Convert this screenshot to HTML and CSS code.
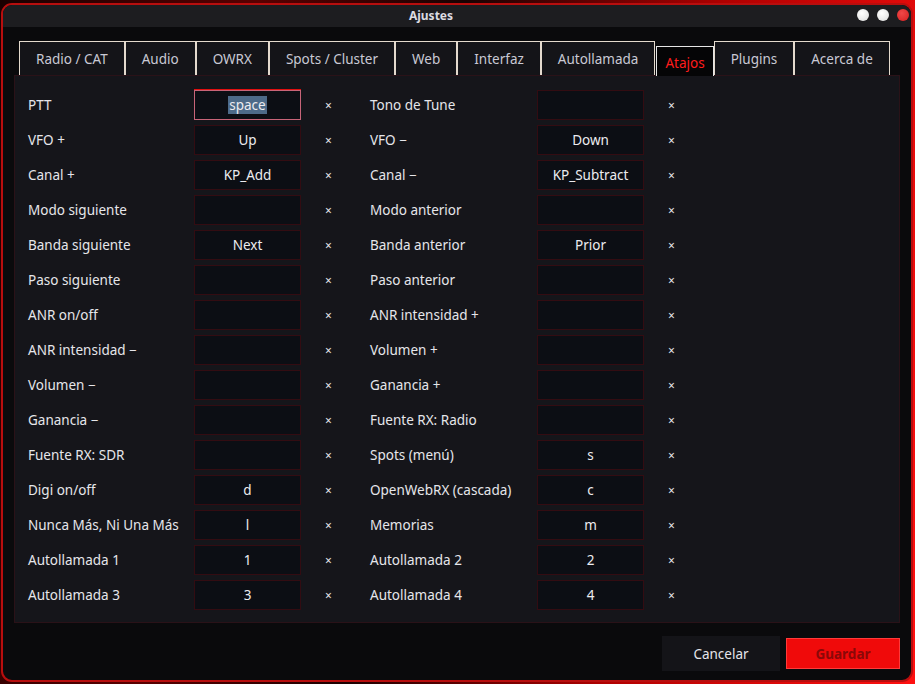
FILE: index.html
```html
<!DOCTYPE html>
<html>
<head>
  <meta charset="UTF-8">
  <link rel="stylesheet" href="styles.css">
</head>
<body>
  <div class="window">
    <div class="title-bar">
      <div class="title">Ajustes</div>
      <div class="win-buttons">
        <span class="win-btn"></span>
        <span class="win-btn"></span>
        <span class="win-btn close"></span>
      </div>
    </div>

    <div class="content">
      <div class="tabs">
        <div class="tab">Radio / CAT</div>
        <div class="tab">Audio</div>
        <div class="tab">OWRX</div>
        <div class="tab">Spots / Cluster</div>
        <div class="tab">Web</div>
        <div class="tab">Interfaz</div>
        <div class="tab">Autollamada</div>
        <div class="tab active">Atajos</div>
        <div class="tab">Plugins</div>
        <div class="tab">Acerca de</div>
      </div>

      <div class="pane">
        <div class="shortcuts">
          <div class="label">PTT</div>
          <div class="key focused"><span class="sel">space</span></div>
          <div class="clear">×</div>
          <div class="label">Tono de Tune</div>
          <div class="key"></div>
          <div class="clear">×</div>

          <div class="label">VFO +</div>
          <div class="key">Up</div>
          <div class="clear">×</div>
          <div class="label">VFO −</div>
          <div class="key">Down</div>
          <div class="clear">×</div>

          <div class="label">Canal +</div>
          <div class="key">KP_Add</div>
          <div class="clear">×</div>
          <div class="label">Canal −</div>
          <div class="key">KP_Subtract</div>
          <div class="clear">×</div>

          <div class="label">Modo siguiente</div>
          <div class="key"></div>
          <div class="clear">×</div>
          <div class="label">Modo anterior</div>
          <div class="key"></div>
          <div class="clear">×</div>

          <div class="label">Banda siguiente</div>
          <div class="key">Next</div>
          <div class="clear">×</div>
          <div class="label">Banda anterior</div>
          <div class="key">Prior</div>
          <div class="clear">×</div>

          <div class="label">Paso siguiente</div>
          <div class="key"></div>
          <div class="clear">×</div>
          <div class="label">Paso anterior</div>
          <div class="key"></div>
          <div class="clear">×</div>

          <div class="label">ANR on/off</div>
          <div class="key"></div>
          <div class="clear">×</div>
          <div class="label">ANR intensidad +</div>
          <div class="key"></div>
          <div class="clear">×</div>

          <div class="label">ANR intensidad −</div>
          <div class="key"></div>
          <div class="clear">×</div>
          <div class="label">Volumen +</div>
          <div class="key"></div>
          <div class="clear">×</div>

          <div class="label">Volumen −</div>
          <div class="key"></div>
          <div class="clear">×</div>
          <div class="label">Ganancia +</div>
          <div class="key"></div>
          <div class="clear">×</div>

          <div class="label">Ganancia −</div>
          <div class="key"></div>
          <div class="clear">×</div>
          <div class="label">Fuente RX: Radio</div>
          <div class="key"></div>
          <div class="clear">×</div>

          <div class="label">Fuente RX: SDR</div>
          <div class="key"></div>
          <div class="clear">×</div>
          <div class="label">Spots (menú)</div>
          <div class="key">s</div>
          <div class="clear">×</div>

          <div class="label">Digi on/off</div>
          <div class="key">d</div>
          <div class="clear">×</div>
          <div class="label">OpenWebRX (cascada)</div>
          <div class="key">c</div>
          <div class="clear">×</div>

          <div class="label">Nunca Más, Ni Una Más</div>
          <div class="key">l</div>
          <div class="clear">×</div>
          <div class="label">Memorias</div>
          <div class="key">m</div>
          <div class="clear">×</div>

          <div class="label">Autollamada 1</div>
          <div class="key">1</div>
          <div class="clear">×</div>
          <div class="label">Autollamada 2</div>
          <div class="key">2</div>
          <div class="clear">×</div>

          <div class="label">Autollamada 3</div>
          <div class="key">3</div>
          <div class="clear">×</div>
          <div class="label">Autollamada 4</div>
          <div class="key">4</div>
          <div class="clear">×</div>
        </div>
      </div>

      <div class="footer">
        <button class="btn cancel">Cancelar</button>
        <button class="btn save">Guardar</button>
      </div>
    </div>
  </div>
</body>
</html>
```

FILE: styles.css
```css
* {
  box-sizing: border-box;
}

body {
  width: 915px;
  height: 684px;
  margin: 0;
  padding: 3px 2px 2px 1px;
  display: flex;
  background: linear-gradient(100deg, #1a0000 0%, #5a0000 25%, #1a0202 45%, #b00000 70%, #ff1010 100%);
  font-family: "Noto Sans", "Open Sans", sans-serif;
  font-size: 13.5px;
  color: #e6e6ea;
  overflow: hidden;
}

.window {
  flex: 1;
  display: flex;
  flex-direction: column;
  border: 2px solid #b80e0e;
  border-radius: 11px;
  background: #0a0a0c;
  overflow: hidden;
}

.title-bar {
  height: 22px;
  padding-right: 52px;
  padding-bottom: 2px;
  background: #1d1d20;
  display: flex;
  align-items: center;
  justify-content: center;
  position: relative;
}

.title {
  font-size: 12px;
  font-weight: bold;
  color: #dcdce2;
}

.win-buttons {
  position: absolute;
  right: 2px;
  top: 4px;
  display: flex;
  gap: 8px;
}

.win-btn {
  width: 12px;
  height: 12px;
  border-radius: 50%;
  background: radial-gradient(circle at 40% 35%, #ffffff, #dadada);
}

.win-btn.close {
  background: radial-gradient(circle at 40% 35%, #f04848, #d82020);
}

.content {
  flex: 1;
  display: flex;
  flex-direction: column;
  padding: 14px 11px 9px 11px;
}

.tabs {
  display: flex;
  align-items: flex-end;
  padding-left: 5px;
  height: 34px;
}

.tab {
  height: 34px;
  padding: 0 16px;
  display: flex;
  align-items: center;
  background: #141418;
  border: 1px solid #e4dacd;
  border-bottom: none;
  color: #c9c9d4;
  white-space: nowrap;
}

.tab.active {
  height: 30px;
  margin-bottom: -1px;
  margin-left: 1px;
  padding: 2px 8px 0;
  background: #050506;
  border-color: #e6e6e6;
  color: #ff1c1c;
  position: relative;
  z-index: 1;
}

.pane {
  height: 548px;
  background: #15151a;
  border: 1px solid #2a1218;
  padding: 14px 13px;
}

.shortcuts {
  display: grid;
  grid-template-columns: 166px 107px 69px 167px 107px 1fr;
  grid-auto-rows: 30px;
  row-gap: 5px;
  align-items: center;
}

.label {
  white-space: nowrap;
}

.key {
  height: 30px;
  display: flex;
  align-items: center;
  justify-content: center;
  background:
    linear-gradient(#e0e0e0, #e0e0e0) left top / 1px 1px no-repeat,
    linear-gradient(#e0e0e0, #e0e0e0) right top / 1px 1px no-repeat,
    linear-gradient(#e0e0e0, #e0e0e0) left bottom / 1px 1px no-repeat,
    linear-gradient(#e0e0e0, #e0e0e0) right bottom / 1px 1px no-repeat,
    #0c0e14;
  background-origin: border-box;
  border: 1px solid #330c12;
  color: #ececf0;
}

.key.focused {
  background: #0c0e14;
  border-color: #c86478;
  box-shadow: 0 -1px 0 #e01010;
}

.sel {
  background: #4d6a88;
  padding: 0 1px;
}

.clear {
  padding-left: 24px;
  font-size: 12px;
  color: #e6e6ea;
}

.footer {
  display: flex;
  justify-content: flex-end;
  align-items: center;
  gap: 6px;
  margin-top: 13px;
  height: 35px;
}

.btn {
  font-family: "Noto Sans", "Open Sans", sans-serif;
  font-size: 13.5px;
  border: none;
  cursor: pointer;
}

.btn.cancel {
  width: 118px;
  height: 35px;
  background: #141418;
  color: #e6e6ea;
}

.btn.save {
  width: 114px;
  height: 31px;
  background: #f00a0a;
  border: 1px solid #ff3a3a;
  color: #8a0808;
  font-weight: bold;
}
```
